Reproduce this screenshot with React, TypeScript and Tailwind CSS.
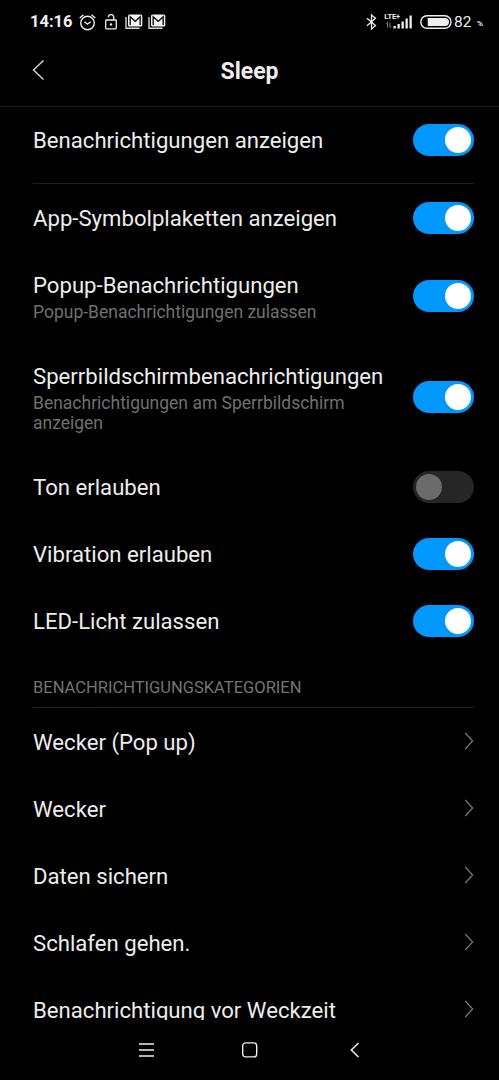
import React from 'react';

function Toggle({ on }: { on: boolean }) {
  return (
    <span
      role="switch"
      aria-checked={on}
      className={`flex h-8 w-[61px] shrink-0 items-center rounded-full px-[3px] ${on ? 'justify-end bg-[#0097ff]' : 'justify-start bg-[#262626]'}`}
    >
      <span className={`size-[26px] rounded-full ${on ? 'bg-white' : 'bg-[#6b6b6b]'}`} />
    </span>
  );
}

type SettingProps = { title: string; detail?: string; on: boolean; height?: string };

function Setting({ title, detail, on, height = 'h-[67px]' }: SettingProps) {
  return (
    <div className={`flex shrink-0 items-center justify-between ${height}`}>
      <div className="w-[360px]">
        <div className={`text-[22.15px] leading-[27px] whitespace-nowrap ${detail ? 'pt-[3px]' : 'pt-px'}`}>{title}</div>
        {detail && <div className="mt-[3px] w-[330px] text-[17.5px] leading-5 text-[#707070]">{detail}</div>}
      </div>
      <Toggle on={on} />
    </div>
  );
}

function Category({ title }: { title: string }) {
  return (
    <div className="flex h-[67px] shrink-0 items-center justify-between">
      <span className="pt-0.5 text-[22.15px] leading-[27px] whitespace-nowrap">{title}</span>
      <svg className="mb-px" width="10" height="18" viewBox="0 0 10 18" fill="none" stroke="#808080" strokeWidth="1.1">
        <path d="M1.2 1 8.7 9 1.2 17" />
      </svg>
    </div>
  );
}

function MailIcon() {
  return (
    <svg width="18" height="16" viewBox="0 0 18 16" fill="none">
      <path d="M1 3v11.3h13.5" stroke="#d8d8d8" strokeWidth="1.4" />
      <rect x="3" y="0.5" width="14.3" height="12" rx="1.5" fill="#f2f2f2" />
      <path d="M5.2 11V2.8l5 4.4 5-4.4V11" stroke="#111" strokeWidth="1.4" />
    </svg>
  );
}

function StatusBar() {
  return (
    <div className="flex h-11 shrink-0 items-center justify-between pr-[15px] pl-[30px] text-[#eeeeee]">
      <div className="flex items-center">
        <span className="w-[49px] pt-px text-[16.5px] font-bold">14:16</span>
        <svg width="17" height="17" viewBox="0 0 17 17" fill="none" stroke="currentColor" strokeWidth="1.4">
          <circle cx="8.5" cy="9" r="6.8" />
          <path d="M.7 4 4.5.8M16.3 4 12.5.8M5.5 7.7l3 2.5 3.2-2.5" />
        </svg>
        <svg className="ml-[9px]" width="12" height="16" viewBox="0 0 12 16" fill="none" stroke="currentColor" strokeWidth="1.3">
          <rect x=".7" y="6" width="10.6" height="8.8" rx=".8" />
          <path d="M8.7 6V3.6a2.7 2.7 0 0 0-5.4-.4" />
          <circle cx="6" cy="10.4" r="1.2" fill="currentColor" stroke="none" />
        </svg>
        <span className="ml-2 flex gap-[5px]">
          <MailIcon />
          <MailIcon />
        </span>
      </div>
      <div className="flex items-center">
        <svg width="11" height="16" viewBox="0 0 11 16" fill="none" stroke="currentColor" strokeWidth="1.3">
          <path d="m1 4.2 8.5 7.4-4 3.4V1l4 3.3L1 11.7" />
        </svg>
        <svg className="ml-2 overflow-visible" width="28" height="18" viewBox="0 0 28 18">
          <text x="-0.8" y="6.3" fontSize="7.4" fontWeight="700" fill="currentColor">LTE+</text>
          <path d="M2.5 14.5V9.5l-1 1.5M5 9.5v5l1-1.5" fill="none" stroke="#888" strokeWidth=".9" />
          <path d="M8.5 13h2.3v2.5H8.5zM12.5 11h2.3v4.5h-2.3zM16.5 8.5h2.3v7h-2.3zM20.5 5.5h2.3v10h-2.3zM24.5 2.5h2.3v13h-2.3z" fill="currentColor" />
        </svg>
        <svg className="ml-[7px]" width="32" height="14" viewBox="0 0 32 14">
          <rect x=".8" y=".8" width="30.2" height="12.4" rx="6.2" fill="none" stroke="currentColor" strokeWidth="1.4" />
          <path d="M7.7 3H25a4 4 0 0 1 0 8H7.7z" fill="currentColor" />
        </svg>
        <span className="ml-[2px] w-[23px] pt-px text-[15.5px] whitespace-nowrap">82</span>
        <span className="w-[7px] pt-1 text-[8px] font-bold">%</span>
      </div>
    </div>
  );
}

const categories = ['Wecker (Pop up)', 'Wecker', 'Daten sichern', 'Schlafen gehen.', 'Benachrichtigung vor Weckzeit'];

export default function App() {
  return (
    <div className="flex h-[1080px] w-[499px] flex-col overflow-hidden bg-black font-['Roboto',sans-serif] text-[#ededed]">
      <StatusBar />
      <header className="grid h-[62px] shrink-0 grid-cols-[1fr_auto_1fr] items-start pt-[15px]">
        <svg className="ml-8" width="13" height="22" viewBox="0 0 13 22" fill="none" stroke="#d8d8d8" strokeWidth="1.4">
          <path d="M11.5 1.5 1.5 11l10 9.5" />
        </svg>
        <h1 className="pt-px text-[23px] leading-6 font-bold">Sleep</h1>
        <span />
      </header>
      <div className="h-px shrink-0 bg-[#1c1c1c]" />
      <main className="flex h-[913px] shrink-0 flex-col overflow-hidden pr-[25px] pl-[33px]">
        <div className="-mt-px mb-[10px] shrink-0">
          <Setting title="Benachrichtigungen anzeigen" on />
        </div>
        <div className="h-px shrink-0 bg-[#1f1f1f]" />
        <Setting title="App-Symbolplaketten anzeigen" on />
        <Setting title="Popup-Benachrichtigungen" detail="Popup-Benachrichtigungen zulassen" on height="h-[89px]" />
        <Setting
          title="Sperrbildschirmbenachrichtigungen"
          detail="Benachrichtigungen am Sperrbildschirm anzeigen"
          on
          height="h-[113px]"
        />
        <Setting title="Ton erlauben" on={false} />
        <Setting title="Vibration erlauben" on />
        <Setting title="LED-Licht zulassen" on />
        <h2 className="h-[53px] shrink-0 pt-6 text-[16.5px] leading-5 text-[#747474]">BENACHRICHTIGUNGSKATEGORIEN</h2>
        <div className="h-px shrink-0 bg-[#1f1f1f]" />
        {categories.map((title) => (
          <Category key={title} title={title} />
        ))}
      </main>
      <nav className="flex h-[60px] shrink-0 items-center pl-[139px] text-[#f0f0f0]">
        <svg width="15" height="14" viewBox="0 0 15 14" stroke="currentColor" strokeWidth="1.3">
          <path d="M0 1h15M0 7h15M0 13h15" />
        </svg>
        <svg className="ml-[88px]" width="16" height="16" viewBox="0 0 16 16" fill="none" stroke="currentColor" strokeWidth="1.4">
          <rect x=".7" y=".9" width="14" height="14" rx="3" />
        </svg>
        <svg className="ml-[92px]" width="10" height="16" viewBox="0 0 10 16" fill="none" stroke="currentColor" strokeWidth="1.5">
          <path d="M8.5 1 1.3 8l7.2 7" />
        </svg>
      </nav>
    </div>
  );
}
